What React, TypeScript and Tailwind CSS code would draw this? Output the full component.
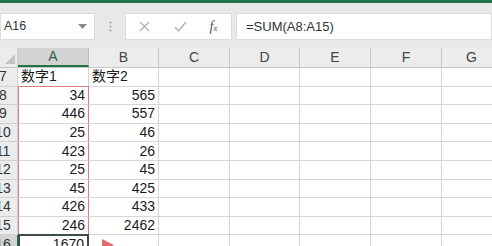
const cols = [
  { key: 'A', w: 'w-[71px]' },
  { key: 'B', w: 'w-[70px]' },
  { key: 'C', w: 'w-[71px]' },
  { key: 'D', w: 'w-[70px]' },
  { key: 'E', w: 'w-[71px]' },
  { key: 'F', w: 'w-[71px]' },
  { key: 'G', w: 'w-[60px]' },
]

const rows: { n: number; a: string; b: string }[] = [
  { n: 7, a: '数字1', b: '数字2' },
  { n: 8, a: '34', b: '565' },
  { n: 9, a: '446', b: '557' },
  { n: 10, a: '25', b: '46' },
  { n: 11, a: '423', b: '26' },
  { n: 12, a: '25', b: '45' },
  { n: 13, a: '45', b: '425' },
  { n: 14, a: '426', b: '433' },
  { n: 15, a: '246', b: '2462' },
  { n: 16, a: '1670', b: '' },
]

const font = "font-['Liberation_Sans','Noto_Sans_CJK_SC',sans-serif]"

function RowHead({ n }: { n: number }) {
  const active = n === 16
  return (
    <div
      className={`w-[18px] shrink-0 overflow-hidden border-r border-b ${
        active ? 'bg-[#d3d3d3] border-r-[#217346] border-b-[#c6c6c6]' : 'bg-[#ececec] border-[#d0d0d0]'
      }`}
    >
      <div className="-ml-[10px] w-[26px] h-full flex items-center justify-center text-[14px] text-[#333]">{n}</div>
    </div>
  )
}

export default function App() {
  return (
    <div className={`w-[492px] h-[246px] overflow-hidden bg-white ${font}`}>
      {/* ribbon edge */}
      <div className="h-[3px] bg-[#217346]" />

      {/* formula bar */}
      <div className="h-[45px] bg-[#e8e8e8] flex pt-[10px]">
        <div className="w-[95px] h-[27px] bg-white border border-[#dcdcdc] flex items-center justify-between pl-[3px] pr-[7px]">
          <span className="text-[12.5px] text-[#333]">A16</span>
          <svg width="9" height="5" viewBox="0 0 9 5">
            <path d="M0 0 L9 0 L4.5 5 Z" fill="#8a8a8a" />
          </svg>
        </div>
        <div className="w-[30px] h-[27px] flex items-center justify-center">
          <svg width="3" height="11" viewBox="0 0 3 11">
            <circle cx="1.5" cy="1.5" r="1" fill="#a0a0a0" />
            <circle cx="1.5" cy="5.5" r="1" fill="#a0a0a0" />
            <circle cx="1.5" cy="9.5" r="1" fill="#a0a0a0" />
          </svg>
        </div>
        <div className="w-[107px] h-[27px] bg-white border border-[#dcdcdc] flex items-center">
          <div className="w-[36px] flex justify-center">
            <svg width="11" height="11" viewBox="0 0 11 11">
              <path d="M1 1 L10 10 M10 1 L1 10" stroke="#b4b4b4" strokeWidth="1.4" />
            </svg>
          </div>
          <div className="w-[36px] flex justify-center">
            <svg width="13" height="11" viewBox="0 0 13 11">
              <path d="M1 6 L4.5 10 L12 1" stroke="#b4b4b4" strokeWidth="1.4" fill="none" />
            </svg>
          </div>
          <div className="flex-1 flex justify-center pr-[2px]">
            <span className="font-['Liberation_Serif',serif] italic text-[14px] text-[#555]">
              f<span className="text-[9px]">x</span>
            </span>
          </div>
        </div>
        <div className="w-[4px]" />
        <div className="flex-1 h-[27px] bg-white border border-[#dcdcdc] flex items-center pl-[9px]">
          <span className="text-[13px] text-[#333]">=SUM(A8:A15)</span>
        </div>
      </div>

      {/* column headers */}
      <div className="h-[20px] flex bg-[#ececec] border-b border-[#c6c6c6]">
        <div className="w-[18px] shrink-0 border-r border-[#d0d0d0] flex items-end justify-end pb-[3px] pr-[2px]">
          <svg width="10" height="10" viewBox="0 0 10 10">
            <path d="M10 0 L10 10 L0 10 Z" fill="#c4c4c4" />
          </svg>
        </div>
        {cols.map((c) => (
          <div
            key={c.key}
            className={`${c.w} shrink-0 flex items-center justify-center text-[14px] border-r ${
              c.key === 'A'
                ? 'bg-[#d3d3d3] border-[#bdbdbd] text-[#2f5f45] border-b-2 border-b-[#217346]'
                : 'text-[#444] border-[#c8c8c8]'
            }`}
          >
            {c.key}
          </div>
        ))}
      </div>

      {/* grid */}
      <div className="flex flex-col">
        {rows.map((r) => (
          <div key={r.n} className="h-[18.6px] flex text-[14px] text-[#1a1a1a]">
            <RowHead n={r.n} />
            {cols.map((c) => {
              const val = c.key === 'A' ? r.a : c.key === 'B' ? r.b : ''
              const isHead = r.n === 7
              const inRed = c.key === 'A' && r.n >= 8 && r.n <= 15
              const selected = c.key === 'A' && r.n === 16
              let cls = 'border-r border-b border-[#d6d6d6]'
              if (inRed) {
                cls = `border-x border-[#d98080] border-b ${r.n === 15 ? '' : 'border-b-[#d6d6d6]'}`
                if (r.n === 8) cls += ' border-t border-t-[#d98080] -mt-px'
              }
              if (selected) cls = 'border-2 border-[#3d4d43] -mt-px'
              return (
                <div
                  key={c.key}
                  className={`${c.w} shrink-0 relative flex items-center ${isHead ? 'justify-start pl-[3px]' : 'justify-end pr-[3px]'} ${cls}`}
                >
                  {val}
                  {c.key === 'B' && r.n === 16 && (
                    <svg className="absolute left-[13px] top-[4px]" width="12" height="12" viewBox="0 0 12 12">
                      <path d="M0 0 L12 6 L0 12 Z" fill="#e36a6a" />
                    </svg>
                  )}
                </div>
              )
            })}
          </div>
        ))}
      </div>
    </div>
  )
}
